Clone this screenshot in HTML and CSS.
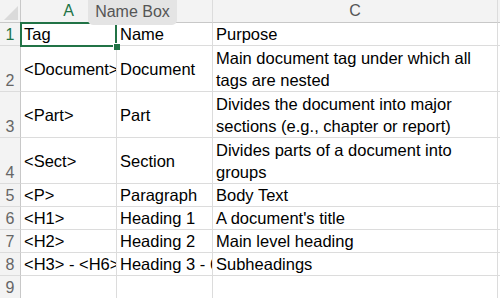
FILE: index.html
```html
<!DOCTYPE html>
<html lang="en">
<head>
    <meta charset="UTF-8">
    <title>Tags</title>
    <link rel="stylesheet" href="styles.css">
</head>
<body>
    <div class="sheet">
        <div class="grid">
            <div class="corner"><span class="corner-tri"></span></div>
            <div class="col-head active">A</div>
            <div class="col-head"></div>
            <div class="col-head">C</div>
            <div class="col-head tail"></div>

            <div class="row-head active">1</div>
            <div class="cell">Tag</div>
            <div class="cell">Name</div>
            <div class="cell">Purpose</div>
            <div class="cell tail"></div>

            <div class="row-head">2</div>
            <div class="cell">&lt;Document&gt;</div>
            <div class="cell">Document</div>
            <div class="cell">Main document tag under which all tags are nested</div>
            <div class="cell tail"></div>

            <div class="row-head">3</div>
            <div class="cell">&lt;Part&gt;</div>
            <div class="cell">Part</div>
            <div class="cell">Divides the document into major sections (e.g., chapter or report)</div>
            <div class="cell tail"></div>

            <div class="row-head">4</div>
            <div class="cell">&lt;Sect&gt;</div>
            <div class="cell">Section</div>
            <div class="cell">Divides parts of a document into groups</div>
            <div class="cell tail"></div>

            <div class="row-head">5</div>
            <div class="cell">&lt;P&gt;</div>
            <div class="cell">Paragraph</div>
            <div class="cell">Body Text</div>
            <div class="cell tail"></div>

            <div class="row-head">6</div>
            <div class="cell">&lt;H1&gt;</div>
            <div class="cell">Heading 1</div>
            <div class="cell">A document's title</div>
            <div class="cell tail"></div>

            <div class="row-head">7</div>
            <div class="cell">&lt;H2&gt;</div>
            <div class="cell">Heading 2</div>
            <div class="cell">Main level heading</div>
            <div class="cell tail"></div>

            <div class="row-head">8</div>
            <div class="cell">&lt;H3&gt; - &lt;H6&gt;</div>
            <div class="cell">Heading 3 - 6</div>
            <div class="cell">Subheadings</div>
            <div class="cell tail"></div>

            <div class="row-head">9</div>
            <div class="cell"></div>
            <div class="cell"></div>
            <div class="cell"></div>
            <div class="cell tail"></div>
        </div>

        <div class="selection"></div>
        <div class="fill-handle"></div>
        <div class="tooltip">Name Box</div>
    </div>
</body>
</html>
```

FILE: styles.css
```css
body {
    margin: 0;
    background: #ffffff;
    font-family: "Liberation Sans", Arial, sans-serif;
    overflow: hidden;
}

.sheet {
    position: relative;
    width: 500px;
    height: 298px;
    overflow: hidden;
}

.grid {
    display: grid;
    grid-template-columns: 21px 96px 96px 285px 20px;
    grid-template-rows: 23px 23px 46px 46px 46px 23px 23px 23px 23px 23px;
}

.grid > div {
    box-sizing: border-box;
    border-right: 1px solid #dcdcdc;
    border-bottom: 1px solid #dcdcdc;
    font-size: 16.5px;
    line-height: 22px;
    overflow: hidden;
}

.corner {
    background: #f3f3f3;
    position: relative;
    border-right-color: #c8c8c8 !important;
    border-bottom-color: #c8c8c8 !important;
}

.corner-tri {
    position: absolute;
    right: 2px;
    bottom: 2px;
    width: 14px;
    height: 14px;
    background: #dadada;
    clip-path: polygon(100% 0, 100% 100%, 0 100%);
}

.col-head {
    background: #f3f3f3;
    color: #555555;
    text-align: center;
    font-size: 16px !important;
    line-height: 22px !important;
    border-bottom-color: #c8c8c8 !important;
}

.col-head.active {
    color: #217346;
}

.row-head {
    background: #f3f3f3;
    color: #666666;
    text-align: center;
    font-size: 16px !important;
    line-height: 21px !important;
    display: flex;
    align-items: flex-end;
    justify-content: center;
    border-right-color: #c8c8c8 !important;
}

.row-head.active {
    color: #217346;
}

.cell {
    color: #000000;
    padding-left: 3px;
    display: flex;
    align-items: center;
    white-space: nowrap;
}

.cell:nth-child(5n+4) {
    white-space: normal;
    padding-right: 2px;
}

.tail {
    border-right: none !important;
}

.selection {
    position: absolute;
    left: 20px;
    top: 22px;
    width: 97px;
    height: 25px;
    box-sizing: border-box;
    border: 2px solid #217346;
}

.fill-handle {
    position: absolute;
    left: 113px;
    top: 43px;
    width: 7px;
    height: 7px;
    background: #217346;
    border-left: 1px solid #ffffff;
    border-top: 1px solid #ffffff;
    box-sizing: border-box;
}

.tooltip {
    position: absolute;
    left: 88px;
    top: 0;
    width: 89px;
    height: 25px;
    background: #e4e4e4;
    border-radius: 0 0 5px 5px;
    color: #555555;
    font-size: 16px;
    line-height: 24px;
    text-align: center;
}
```
